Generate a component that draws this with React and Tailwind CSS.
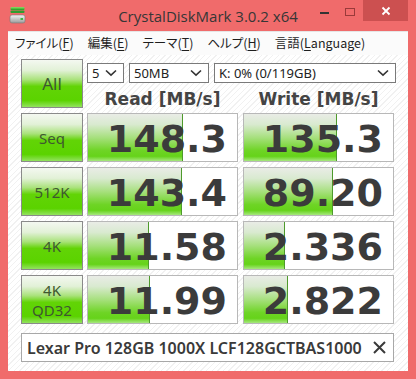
import React from "react";

const rows = [
  { label: ["Seq"], read: "148.3", write: "135.3", rf: 95, wf: 93 },
  { label: ["512K"], read: "143.4", write: "89.20", rf: 94, wf: 89 },
  { label: ["4K"], read: "11.58", write: "2.336", rf: 61, wf: 41 },
  { label: ["4K", "QD32"], read: "11.99", write: "2.822", rf: 62, wf: 44 },
];

function Btn({ children, big }) {
  return (
    <div
      className={
        "w-[62px] h-[49px] shrink-0 border border-[#8a8a8a] flex flex-col items-center justify-center leading-[20px] text-[#3e5830] font-['Noto_Sans',sans-serif] bg-[linear-gradient(to_bottom,#f4f8f1_0%,#e2f1d7_22%,#a9e27a_42%,#62d406_56%,#5bd300_86%,#93e35f_100%)] " +
        (big ? "text-[17px]" : "text-[15px]")
      }
    >
      {children}
    </div>
  );
}

function Val({ v, fill }) {
  return (
    <div className="relative w-[151px] h-[49px] shrink-0 border border-[#b8b8b8] bg-white overflow-hidden">
      <div
        className="absolute left-0 top-0 bottom-0 border-r border-[#4e9a2c] bg-[linear-gradient(to_bottom,#e9ece6_0%,#d9ead0_22%,#a7e07e_50%,#6ed425_78%,#66d31a_90%,#a6e87e_100%)]"
        style={{ width: fill }}
      />
      <div className="relative h-full flex items-center justify-end pr-[10px] pt-[2px] font-['DejaVu_Sans',sans-serif] font-bold text-[38px] leading-none text-[#3b3b3b]">
        {v}
      </div>
    </div>
  );
}

function Chevron() {
  return (
    <svg width="12" height="8" viewBox="0 0 12 8" className="shrink-0">
      <path d="M1 1.5 L6 6.2 L11 1.5" fill="none" stroke="#333" strokeWidth="1.6" />
    </svg>
  );
}

function Drop({ w, text }) {
  return (
    <div
      className={
        "h-[20px] border border-[#7a7a7a] bg-white flex items-center justify-between pl-[4px] pr-[6px] text-[13px] text-[#222] font-['Noto_Sans',sans-serif] " +
        w
      }
    >
      <span className="leading-none">{text}</span>
      <Chevron />
    </div>
  );
}

function M({ a, k, b }) {
  return (
    <span className="whitespace-nowrap">
      {a}(<span className="underline underline-offset-2">{k}</span>{b})
    </span>
  );
}

export default function App() {
  return (
    <div className="w-[416px] h-[379px] bg-[#f06b6b] flex flex-col overflow-hidden">
      <div className="h-[31px] shrink-0 relative flex items-center justify-center">
        <svg width="18" height="18" viewBox="0 0 18 18" className="absolute left-[9px] top-[6px]">
          <defs>
            <linearGradient id="g1" x1="0" y1="0" x2="0" y2="1">
              <stop offset="0" stopColor="#8fe066" />
              <stop offset="1" stopColor="#1f9a1f" />
            </linearGradient>
            <linearGradient id="g2" x1="0" y1="0" x2="0" y2="1">
              <stop offset="0" stopColor="#f4f4f4" />
              <stop offset="1" stopColor="#9a9a9a" />
            </linearGradient>
          </defs>
          <rect x="1.5" y="1" width="14" height="3" rx="1" fill="url(#g1)" />
          <rect x="1.5" y="4.5" width="14" height="2.5" rx="1" fill="#2e9f2e" />
          <rect x="1" y="9" width="15" height="8" rx="2" fill="url(#g2)" stroke="#7a7a7a" strokeWidth="0.6" />
          <rect x="11.5" y="12" width="2.5" height="2" fill="#3fb83f" />
        </svg>
        <span className="text-[15px] text-[#363636] font-['Open_Sans',sans-serif] mt-[1px]">
          CrystalDiskMark 3.0.2 x64
        </span>
        <div className="absolute left-[320px] top-[12px] w-[9px] h-[2px] bg-[#333]" />
        <div className="absolute left-[345px] top-[8px] w-[10px] h-[8px] border border-[#9a3a3a]" />
        <div className="absolute left-[363px] top-0 w-[45px] h-[21px] bg-[#cc5050] flex items-center justify-center">
          <svg width="10" height="10" viewBox="0 0 10 10">
            <path d="M1.5 1.5 L8.5 8.5 M8.5 1.5 L1.5 8.5" stroke="#fff" strokeWidth="1.8" />
          </svg>
        </div>
      </div>

      <div className="mx-[8px] flex-1 flex flex-col bg-white mb-[8px]">
        <div className="h-[24px] shrink-0 bg-[#fbfbfb] border-t border-[#e6e6e6] flex items-center pl-[7px] text-[12.5px] text-[#1e1e1e] font-['Noto_Sans_CJK_JP',sans-serif] [font-feature-settings:'palt'] gap-[14px]">
          <M a="ファイル" k="F" b="" />
          <M a="編集" k="E" b="" />
          <M a="テーマ" k="T" b="" />
          <M a="ヘルプ" k="H" b="" />
          <span className="whitespace-nowrap">
            言語(<span className="underline underline-offset-2">L</span>anguage)
          </span>
        </div>

        <div className="flex-1 flex flex-col pt-[4px] pl-[13px] pr-[14px] bg-[repeating-linear-gradient(135deg,#ffffff_0px,#ffffff_3px,#f1f1f1_3px,#f1f1f1_4px)]">
          <div className="flex flex-col gap-[5px]">
            <div className="flex h-[49px]">
              <Btn big>All</Btn>
              <div className="ml-[4px] flex flex-col">
                <div className="flex gap-[5px] mt-[4px]">
                  <Drop w="w-[37px]" text="5" />
                  <Drop w="w-[80px]" text="50MB" />
                  <Drop w="w-[182px]" text="K: 0% (0/119GB)" />
                </div>
                <div className="flex gap-[5px] mt-[6px] font-['DejaVu_Sans',sans-serif] font-bold text-[17px] leading-[20px] text-[#444]">
                  <div className="w-[151px] text-center">Read [MB/s]</div>
                  <div className="w-[151px] text-center">Write [MB/s]</div>
                </div>
              </div>
            </div>
            {rows.map((r, i) => (
              <div key={i} className="flex">
                <Btn>
                  {r.label.map((l) => (
                    <span key={l}>{l}</span>
                  ))}
                </Btn>
                <div className="ml-[4px]">
                  <Val v={r.read} fill={r.rf} />
                </div>
                <div className="ml-[5px]">
                  <Val v={r.write} fill={r.wf} />
                </div>
              </div>
            ))}
          </div>
          <div className="mt-[9px] h-[29px] border border-[#a8a8a8] bg-white flex items-center justify-between pl-[5px] pr-[6px]">
            <span className="font-['Noto_Sans',sans-serif] font-semibold text-[16px] text-[#3a3a3a] leading-none">
              Lexar Pro 128GB 1000X LCF128GCTBAS1000
            </span>
            <svg width="15" height="15" viewBox="0 0 15 15">
              <path d="M2 2 L13 13 M13 2 L2 13" stroke="#3a3a3a" strokeWidth="2" />
            </svg>
          </div>
        </div>
      </div>
    </div>
  );
}
